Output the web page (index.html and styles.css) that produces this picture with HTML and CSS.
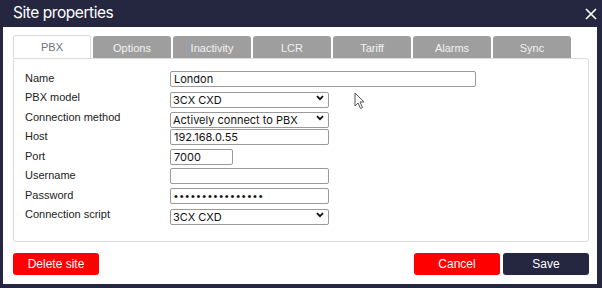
FILE: index.html
```html
<!DOCTYPE html>
<html>
<head>
<meta charset="utf-8">
<link rel="stylesheet" href="styles.css">
</head>
<body>
<div class="dialog">
  <div class="titlebar">
    <span class="title">Site properties</span>
    <svg class="close" width="12" height="12" viewBox="0 0 12 12"><path d="M1 1L11 11M11 1L1 11" stroke="#fff" stroke-width="1.6" fill="none"/></svg>
  </div>
  <div class="body">
    <div class="tabs">
      <div class="tab active">PBX</div>
      <div class="tab">Options</div>
      <div class="tab">Inactivity</div>
      <div class="tab">LCR</div>
      <div class="tab">Tariff</div>
      <div class="tab">Alarms</div>
      <div class="tab">Sync</div>
    </div>
    <div class="panel">
      <div class="form">
        <label class="lbl">Name</label>
        <div class="field"><input class="inp w-name" type="text" value="London"></div>
        <label class="lbl">PBX model</label>
        <div class="field"><div class="selwrap"><select class="inp sel"><option>3CX CXD</option></select><svg class="chev" width="8" height="6" viewBox="0 0 8 6"><path d="M1 1.2L4 4.2L7 1.2" stroke="#111" stroke-width="1.8" fill="none"/></svg></div></div>
        <label class="lbl">Connection method</label>
        <div class="field"><div class="selwrap"><select class="inp sel"><option>Actively connect to PBX</option></select><svg class="chev" width="8" height="6" viewBox="0 0 8 6"><path d="M1 1.2L4 4.2L7 1.2" stroke="#111" stroke-width="1.8" fill="none"/></svg></div></div>
        <label class="lbl">Host</label>
        <div class="field"><input class="inp w-mid" type="text" value="192.168.0.55"></div>
        <label class="lbl">Port</label>
        <div class="field"><input class="inp w-port" type="text" value="7000"></div>
        <label class="lbl">Username</label>
        <div class="field"><input class="inp w-mid" type="text" value=""></div>
        <label class="lbl">Password</label>
        <div class="field"><input class="inp w-mid pw" type="password" value="xxxxxxxxxxxxxxxx"></div>
        <label class="lbl">Connection script</label>
        <div class="field"><div class="selwrap"><select class="inp sel"><option>3CX CXD</option></select><svg class="chev" width="8" height="6" viewBox="0 0 8 6"><path d="M1 1.2L4 4.2L7 1.2" stroke="#111" stroke-width="1.8" fill="none"/></svg></div></div>
      </div>
      <svg class="cursor" width="12" height="18" viewBox="0 0 12 18"><path d="M1 1L1 14L4 11L6.5 16.5L8.5 15.5L6 10L10 10Z" fill="#fff" stroke="#555" stroke-width="1"/></svg>
    </div>
    <div class="actions">
      <button class="btn red">Delete site</button>
      <div class="spacer"></div>
      <button class="btn red">Cancel</button>
      <button class="btn dark">Save</button>
    </div>
  </div>
</div>
</body>
</html>
```
FILE: styles.css
```css
* { box-sizing: border-box; }
html, body { margin: 0; padding: 0; }
body {
  width: 602px;
  height: 288px;
  background: #25263f;
  font-family: "Liberation Sans", Arial, sans-serif;
  overflow: hidden;
}
.dialog {
  width: 602px;
  height: 288px;
  display: flex;
  flex-direction: column;
  padding: 0 5px 4px 3px;
}
.titlebar {
  height: 27px;
  flex: none;
  display: flex;
  align-items: center;
  justify-content: space-between;
  padding: 0 0 2px 10px;
}
.title {
  color: #fff;
  font-family: "Inter", "Liberation Sans", sans-serif;
  font-size: 15.5px;
  letter-spacing: -0.45px;
}
.close { margin-right: 0; margin-top: 2px; }
.body {
  flex: 1;
  background: #fff;
  display: flex;
  flex-direction: column;
  padding: 9px 8px 9px 10px;
}
.tabs {
  display: flex;
  gap: 2px;
  height: 22px;
  position: relative;
  z-index: 1;
}
.tab {
  width: 78px;
  height: 22px;
  background: #9e9e9e;
  color: #f2f2f2;
  font-size: 11px;
  display: flex;
  align-items: center;
  justify-content: center;
  border-radius: 3px 3px 0 0;
  padding-top: 1px;
}
.tab.active {
  background: #fff;
  color: #6d7180;
  border: 1px solid #dcdcdc;
  border-bottom-color: #fff;
  height: 23px;
  margin-top: -1px;
}
.panel {
  position: relative;
  border: 1px solid #dcdcdc;
  border-radius: 0 3px 3px 3px;
  height: 184px;
  padding: 12px 12px 0 11px;
}
.form {
  display: grid;
  grid-template-columns: 145px 1fr;
  row-gap: 3.45px;
}
.lbl {
  font-size: 11px;
  color: #222;
  height: 16px;
  line-height: 15px;
}
.field { height: 16px; display: flex; }
.inp {
  height: 16px;
  border: 1px solid #9a9a9a;
  border-radius: 2px;
  font-family: "Inter", "Liberation Sans", sans-serif;
  font-size: 11px;
  color: #111;
  padding: 0 0 0 3px;
  margin: 0;
  outline: none;
  background: #fff;
}
.w-name { width: 306px; }
.w-mid { width: 159px; }
.w-port { width: 63px; }
.pw { letter-spacing: 1.8px; font-family: "Liberation Sans", sans-serif; font-size: 11px; }
.selwrap { position: relative; width: 159px; height: 16px; }
.sel {
  width: 159px;
  appearance: none;
  -webkit-appearance: none;
  padding-left: 2px;
}
.chev { position: absolute; right: 5px; top: 5px; }
.cursor { position: absolute; left: 340px; top: 33px; }
.actions {
  display: flex;
  gap: 3px;
  margin-top: 11px;
}
.spacer { flex: 1; }
.btn {
  width: 86px;
  height: 22px;
  border: none;
  border-radius: 3px;
  color: #fff;
  font-family: "Liberation Sans", Arial, sans-serif;
  font-size: 12px;
  padding: 0;
}
.red { background: #ff0000; }
.dark { background: #25263f; }
```
